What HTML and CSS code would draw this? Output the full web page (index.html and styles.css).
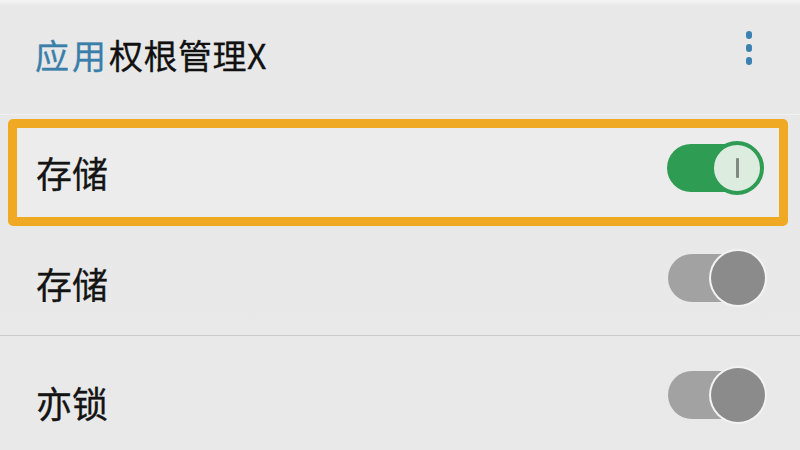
FILE: index.html
```html
<!DOCTYPE html>
<html lang="zh-CN">
<head>
<meta charset="utf-8">
<title>应用权根管理</title>
<link rel="stylesheet" href="styles.css">
</head>
<body>
<div class="screen">
  <header class="appbar">
    <h1 class="title"><span class="accent">应用</span>权根管理X</h1>
    <div class="menu" aria-label="更多">
      <span class="dot"></span><span class="dot"></span><span class="dot"></span>
    </div>
  </header>
  <ul class="list">
    <li class="row row-highlight">
      <span class="label">存储</span>
      <span class="toggle toggle-on"><span class="knob"><span class="bar"></span></span></span>
    </li>
    <li class="row row-plain">
      <span class="label">存储</span>
      <span class="toggle toggle-off"><span class="knob"></span></span>
    </li>
    <li class="row row-plain row-last">
      <span class="label">亦锁</span>
      <span class="toggle toggle-off"><span class="knob"></span></span>
    </li>
  </ul>
</div>
</body>
</html>
```

FILE: styles.css
```css
* { box-sizing: border-box; }
html, body { margin: 0; padding: 0; }
body {
  width: 800px;
  height: 450px;
  overflow: hidden;
  background: #e9e9e9;
  font-family: "Noto Sans CJK SC", "Noto Sans", sans-serif;
  color: #141414;
}
.screen {
  display: flex;
  flex-direction: column;
  height: 450px;
  background: linear-gradient(#f4f4f4 0, #e8e8e8 6px, #e9e9e9 100%);
}
.appbar {
  height: 115px;
  display: flex;
  align-items: center;
  justify-content: space-between;
  padding: 0 48px 3px 35px;
  border-bottom: 1px solid #f1f1f1;
}
.title {
  margin: 0;
  font-size: 34px;
  font-weight: 400;
  letter-spacing: 0.5px;
  line-height: 1;
  color: #111;
  margin-top: -2px;
  -webkit-text-stroke: 0.3px #111;
}
.accent { color: #3a7fa9; letter-spacing: 3px; -webkit-text-stroke: 0.3px #3a7fa9; }
.menu {
  display: flex;
  flex-direction: column;
  gap: 5px;
  margin-bottom: 16px;
}
.dot {
  width: 6px;
  height: 8px;
  border-radius: 3px;
  background: #3b82b2;
}
.list {
  list-style: none;
  margin: 0;
  padding: 0;
  flex: 1;
  display: flex;
  flex-direction: column;
}
.row {
  display: flex;
  align-items: center;
  justify-content: space-between;
}
.label {
  font-size: 36px;
  font-weight: 400;
  line-height: 1;
  -webkit-text-stroke: 0.3px #141414;
}
.row-highlight {
  margin: 4px 12px 0 8px;
  height: 107px;
  border: 9px solid #f0a923;
  border-radius: 5px;
  padding: 0 16px 0 19px;
  background: #ececec;
}
.row-highlight .label { margin-top: -2px; }
.row-highlight .toggle { margin-bottom: 10px; }
.row-plain {
  height: 110px;
  padding: 0 36px 0 36px;
  border-bottom: 1px solid #cbcbcb;
}
.row-plain .label { margin-top: 4px; }
.row-plain .toggle { margin-bottom: 6px; }
.row-last {
  flex: 1;
  border-bottom: none;
  padding-bottom: 4px;
}
.row-last .label { margin-top: 22px; }
.row-last .toggle { margin-top: 8px; margin-bottom: 0; }
.toggle {
  position: relative;
  width: 96px;
  height: 48px;
  border-radius: 24px;
}
.knob {
  position: absolute;
  right: -1px;
  top: 50%;
  width: 54px;
  height: 54px;
  margin-top: -27px;
  border-radius: 50%;
  display: flex;
  align-items: center;
  justify-content: center;
}
.toggle-on { background: #2e9c52; }
.toggle-on .knob {
  background: #dcede0;
  border: 4px solid #2e9c52;
}
.bar {
  width: 3px;
  height: 20px;
  border-radius: 1px;
  background: #7f8881;
}
.toggle-off {
  background: #a2a2a2;
}
.toggle-off .knob {
  background: #8b8b8b;
  box-shadow: 0 0 0 2px #f3f3f3;
}
```
